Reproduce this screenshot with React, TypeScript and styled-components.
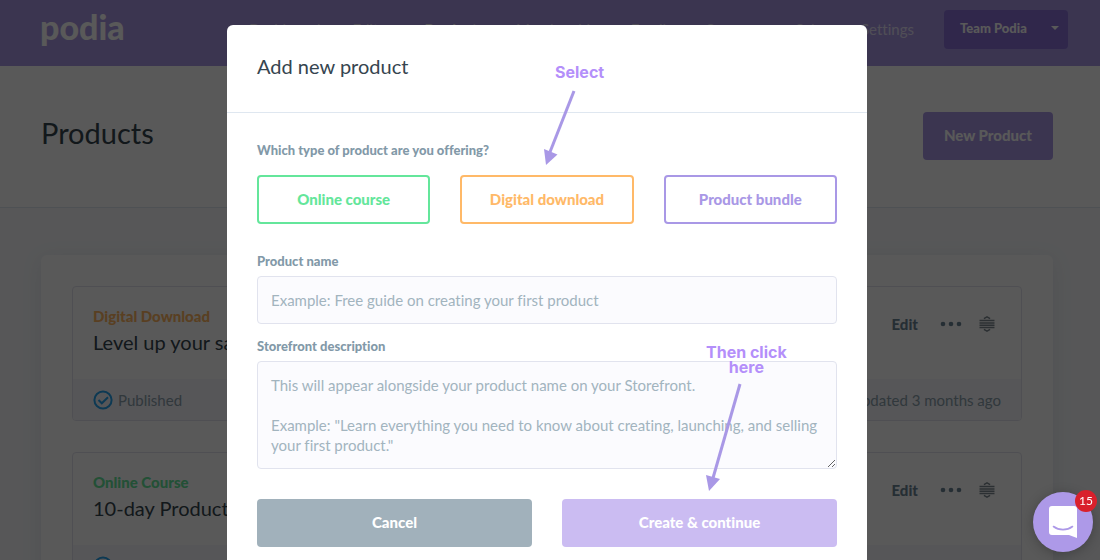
import React from "react";
import styled, { createGlobalStyle } from "styled-components";

const brand = "#a998e6";

const GlobalStyle = createGlobalStyle`
  *, *::before, *::after { box-sizing: border-box; }
  html { overflow: hidden; }
  body { margin: 0; background: #f8fafc; color: #36454f; font-family: Lato, "Liberation Sans", sans-serif; font-size: 15px; line-height: 20px; font-variant-ligatures: none; }
  h1, h2, p { margin: 0; font-weight: 400; }
  button, input, textarea { font: inherit; font-variant-ligatures: none; }
  button { cursor: pointer; }
`;

const Header = styled.header`
  display: flex;
  align-items: flex-start;
  gap: 30px;
  height: 66px;
  padding: 10px 32px 0 40px;
  background: ${brand};
  color: #fff;
`;

const Logo = styled.a`
  width: 179px;
  font-size: 34px;
  line-height: 34px;
  font-weight: 900;
  color: inherit;
  text-decoration: none;
`;

const Nav = styled.nav`
  display: flex;
  flex: 1;
  justify-content: space-between;
  line-height: 38px;
`;

const NavLink = styled.a<{ $active?: boolean }>`
  color: #fff;
  font-weight: ${(p) => (p.$active ? 700 : 400)};
  opacity: ${(p) => (p.$active ? 1 : 0.7)};
  text-decoration: none;
`;

const TeamButton = styled.button`
  display: flex;
  align-items: center;
  justify-content: space-between;
  width: 124px;
  height: 39px;
  padding: 0 9px 3px 16px;
  border: 0;
  border-radius: 4px;
  background: #8a70d8;
  color: #fff;
  font-size: 13px;
  font-weight: 900;
`;

const PageHead = styled.section`
  display: flex;
  align-items: center;
  justify-content: space-between;
  height: 142px;
  padding: 0 47px 2px 41px;
  background: #fff;
  border-bottom: 1px solid #dfe7f0;
`;

const PageTitle = styled.h1`
  padding-bottom: 6px;
  font-size: 29px;
  line-height: 40px;
`;

const SolidButton = styled.button<{ $bg: string }>`
  height: 48px;
  padding: 0 21px 2px;
  border: 0;
  border-radius: 4px;
  background: ${(p) => p.$bg};
  color: #fff;
  font-size: 15px;
  font-weight: 900;
`;

const ListPanel = styled.main`
  display: grid;
  gap: 31px;
  margin: 47px 47px 0 41px;
  padding: 31px;
  border-radius: 6px;
  background: #fff;
  box-shadow: 0 4px 20px rgba(80, 90, 140, 0.12);
`;

const ProductCard = styled.article`
  overflow: hidden;
  border: 1px solid #e3e3ee;
  border-radius: 4px;
`;

const CardBody = styled.div`
  display: flex;
  align-items: flex-start;
  justify-content: space-between;
  height: 92px;
  padding: 19px 26px 0 20px;
`;

const Kind = styled.p<{ $color: string }>`
  color: ${(p) => p.$color};
  font-size: 15px;
  font-weight: 900;
`;

const ProductTitle = styled.h2`
  font-size: 20px;
  line-height: 32px;
`;

const Actions = styled.div`
  display: flex;
  align-items: center;
  gap: 17px;
  padding-top: 8px;
  color: #6c8494;
`;

const EditLink = styled.a`
  padding-right: 5px;
  color: inherit;
  font-weight: 900;
  text-decoration: none;
`;

const IconButton = styled.button`
  display: flex;
  padding: 0;
  border: 0;
  background: none;
  color: inherit;
`;

const CardFoot = styled.div`
  display: flex;
  align-items: center;
  justify-content: space-between;
  height: 41px;
  padding: 0 20px;
  background: #f5f7fc;
  color: #8ca0ac;
`;

const Status = styled.span`
  display: flex;
  align-items: center;
  gap: 5px;
`;

const Overlay = styled.div`
  position: fixed;
  inset: 0;
  overflow-y: auto;
  scrollbar-width: none;
  padding: 25px 6px 25px 0;
  background: rgba(0, 0, 0, 0.65);
`;

const Dialog = styled.div`
  position: relative;
  max-width: 640px;
  margin: 0 auto;
  border-radius: 6px;
  background: #fff;
`;

const DialogHead = styled.div`
  padding: 25px 30px 30px;
  border-bottom: 1px solid #dfe7f0;
`;

const DialogTitle = styled.h2`
  font-size: 20px;
  line-height: 32px;
`;

const Form = styled.form`
  padding: 27px 30px 30px;
`;

const TypeGroup = styled.div`
  display: grid;
  grid-template-columns: repeat(3, 1fr);
  gap: 30px;
  margin: 15px 0 27px;
`;

const Label = styled.label`
  display: block;
  color: #8299a8;
  font-size: 13px;
  font-weight: 900;
`;

const TypeButton = styled.button<{ $color: string }>`
  height: 49px;
  padding: 0 0 2px;
  border: 2px solid ${(p) => p.$color};
  border-radius: 4px;
  background: #fff;
  color: ${(p) => p.$color};
  font-size: 15px;
  font-weight: 900;
`;

const TextInput = styled.input`
  display: block;
  width: 100%;
  height: 48px;
  margin: 5px 0 12px;
  padding: 0 13px;
  border: 1px solid #e1e3ee;
  border-radius: 4px;
  background: #fbfbfe;
  &::placeholder { color: #a2b4be; opacity: 1; }
`;

const TextArea = styled.textarea`
  display: block;
  width: 100%;
  height: 108px;
  margin: 5px 0 30px;
  padding: 13px;
  border: 1px solid #e1e3ee;
  border-radius: 4px;
  background: #fbfbfe;
  resize: vertical;
  overflow: hidden;
  &::placeholder { color: #a2b4be; opacity: 1; }
`;

const ButtonRow = styled.div`
  display: grid;
  grid-template-columns: 1fr 1fr;
  gap: 30px;
`;

const Note = styled.p<{ $left: number; $top: number }>`
  position: absolute;
  left: ${(p) => p.$left}px;
  top: ${(p) => p.$top}px;
  color: #b48ffa;
  font-family: Inter, "Liberation Sans", sans-serif;
  font-size: 16px;
  line-height: 15px;
  font-weight: 700;
  text-align: center;
  pointer-events: none;
`;

const Arrow = styled.svg<{ $left: number; $top: number }>`
  position: absolute;
  left: ${(p) => p.$left}px;
  top: ${(p) => p.$top}px;
  fill: ${brand};
  stroke: none;
  pointer-events: none;
`;

const ChatButton = styled.button`
  position: fixed;
  right: 7px;
  bottom: 8px;
  display: grid;
  place-items: center;
  width: 60px;
  height: 60px;
  padding: 0;
  border: 0;
  border-radius: 50%;
  background: #ad99e8;
  box-shadow: 0 2px 12px rgba(0, 0, 0, 0.25);
`;

const Badge = styled.span`
  position: absolute;
  top: -2px;
  right: -4px;
  width: 22px;
  height: 22px;
  border-radius: 50%;
  background: #d9202c;
  color: #fff;
  font-size: 12px;
  line-height: 22px;
`;

const links = ["Dashboard", "Editor", "Products", "Membership", "Emails", "Coupons", "Sales", "Settings"];

const products = [
  { kind: "Digital Download", color: "#ffb661", title: "Level up your sales" },
  { kind: "Online Course", color: "#64e69b", title: "10-day Product Challenge" },
];

function DotsIcon() {
  return (
    <svg width="22" height="6" viewBox="0 0 22 6" fill="currentColor">
      <circle cx="3" cy="3" r="2.3" /><circle cx="11" cy="3" r="2.3" /><circle cx="19" cy="3" r="2.3" />
    </svg>
  );
}

function SortIcon() {
  return (
    <svg width="16" height="16" viewBox="0 0 16 16" fill="none" stroke="#7f8a92" strokeWidth="1.5">
      <path d="M4.900 2.700 8 .9l3.100 1.800M.5 4.500h15M.5 6.900h15M.5 9.200h15M.5 11.500h15M4.900 13.300 8 15.100l3.100-1.800" />
    </svg>
  );
}

function CheckIcon() {
  return (
    <svg width="20" height="20" viewBox="0 0 20 20" fill="none" stroke="#27a3ee" strokeWidth="2">
      <circle cx="10" cy="10" r="8.6" /><path d="m5.500 10 3.300 3.300L15 7.200" />
    </svg>
  );
}

export default function App() {
  return (
    <>
      <GlobalStyle />
      <Header>
        <Logo href="#">podia</Logo>
        <Nav>
          {links.map((l) => <NavLink key={l} href="#" $active={l === "Products"}>{l}</NavLink>)}
        </Nav>
        <TeamButton>
          Team Podia
          <svg width="8" height="4" viewBox="0 0 8 4" fill="#fff"><path d="M0 0h8L4 4z" /></svg>
        </TeamButton>
      </Header>
      <PageHead>
        <PageTitle>Products</PageTitle>
        <SolidButton $bg={brand}>New Product</SolidButton>
      </PageHead>
      <ListPanel>
        {products.map((p) => (
          <ProductCard key={p.kind}>
            <CardBody>
              <div>
                <Kind $color={p.color}>{p.kind}</Kind>
                <ProductTitle>{p.title}</ProductTitle>
              </div>
              <Actions>
                <EditLink href="#">Edit</EditLink>
                <IconButton aria-label="More actions"><DotsIcon /></IconButton>
                <IconButton aria-label="Reorder"><SortIcon /></IconButton>
              </Actions>
            </CardBody>
            <CardFoot>
              <Status><CheckIcon />Published</Status>
              <span>Updated 3 months ago</span>
            </CardFoot>
          </ProductCard>
        ))}
      </ListPanel>

      <Overlay>
        <Dialog role="dialog" aria-labelledby="dialog-title">
          <DialogHead><DialogTitle id="dialog-title">Add new product</DialogTitle></DialogHead>
          <Form onSubmit={(e) => e.preventDefault()}>
            <Label as="p" id="type-label">Which type of product are you offering?</Label>
            <TypeGroup role="group" aria-labelledby="type-label">
              <TypeButton type="button" $color="#64e69b">Online course</TypeButton>
              <TypeButton type="button" $color="#ffb968">Digital download</TypeButton>
              <TypeButton type="button" $color={brand}>Product bundle</TypeButton>
            </TypeGroup>
            <Label htmlFor="name">Product name</Label>
            <TextInput id="name" placeholder="Example: Free guide on creating your first product" />
            <Label htmlFor="description">Storefront description</Label>
            <TextArea
              id="description"
              placeholder={'This will appear alongside your product name on your Storefront.\n\nExample: "Learn everything you need to know about creating, launching, and selling your first product."'}
            />
            <ButtonRow>
              <SolidButton type="button" $bg="#a1b1bb">Cancel</SolidButton>
              <SolidButton type="submit" $bg="#cbbcf2">Create &amp; continue</SolidButton>
            </ButtonRow>
          </Form>
          <Note $left={328} $top={40}>Select</Note>
          <Arrow $left={316} $top={64} width="34" height="78" viewBox="0 0 34 78">
            <path d="M31 2 7 63" stroke={brand} strokeWidth="3" /><path d="m1 60 13.500 5.500L3 76z" />
          </Arrow>
          <Note $left={479} $top={320}>Then click<br />here</Note>
          <Arrow $left={478} $top={358} width="38" height="110" viewBox="0 0 38 110">
            <path d="M35 1 8 95" stroke={brand} strokeWidth="3" /><path d="m1 92 14 4L4 108z" />
          </Arrow>
        </Dialog>
      </Overlay>

      <ChatButton aria-label="Open chat">
        <svg width="28" height="32" viewBox="0 0 28 32" fill="#fff">
          <path d="M3 0h22a3 3 0 0 1 3 3v29l-8-3H3a3 3 0 0 1-3-3V3a3 3 0 0 1 3-3z" />
          <path d="M4.500 20.500c5.500 4.200 13.500 4.200 19 0" fill="none" stroke="#ad99e8" strokeWidth="1.600" strokeLinecap="round" />
        </svg>
        <Badge>15</Badge>
      </ChatButton>
    </>
  );
}
